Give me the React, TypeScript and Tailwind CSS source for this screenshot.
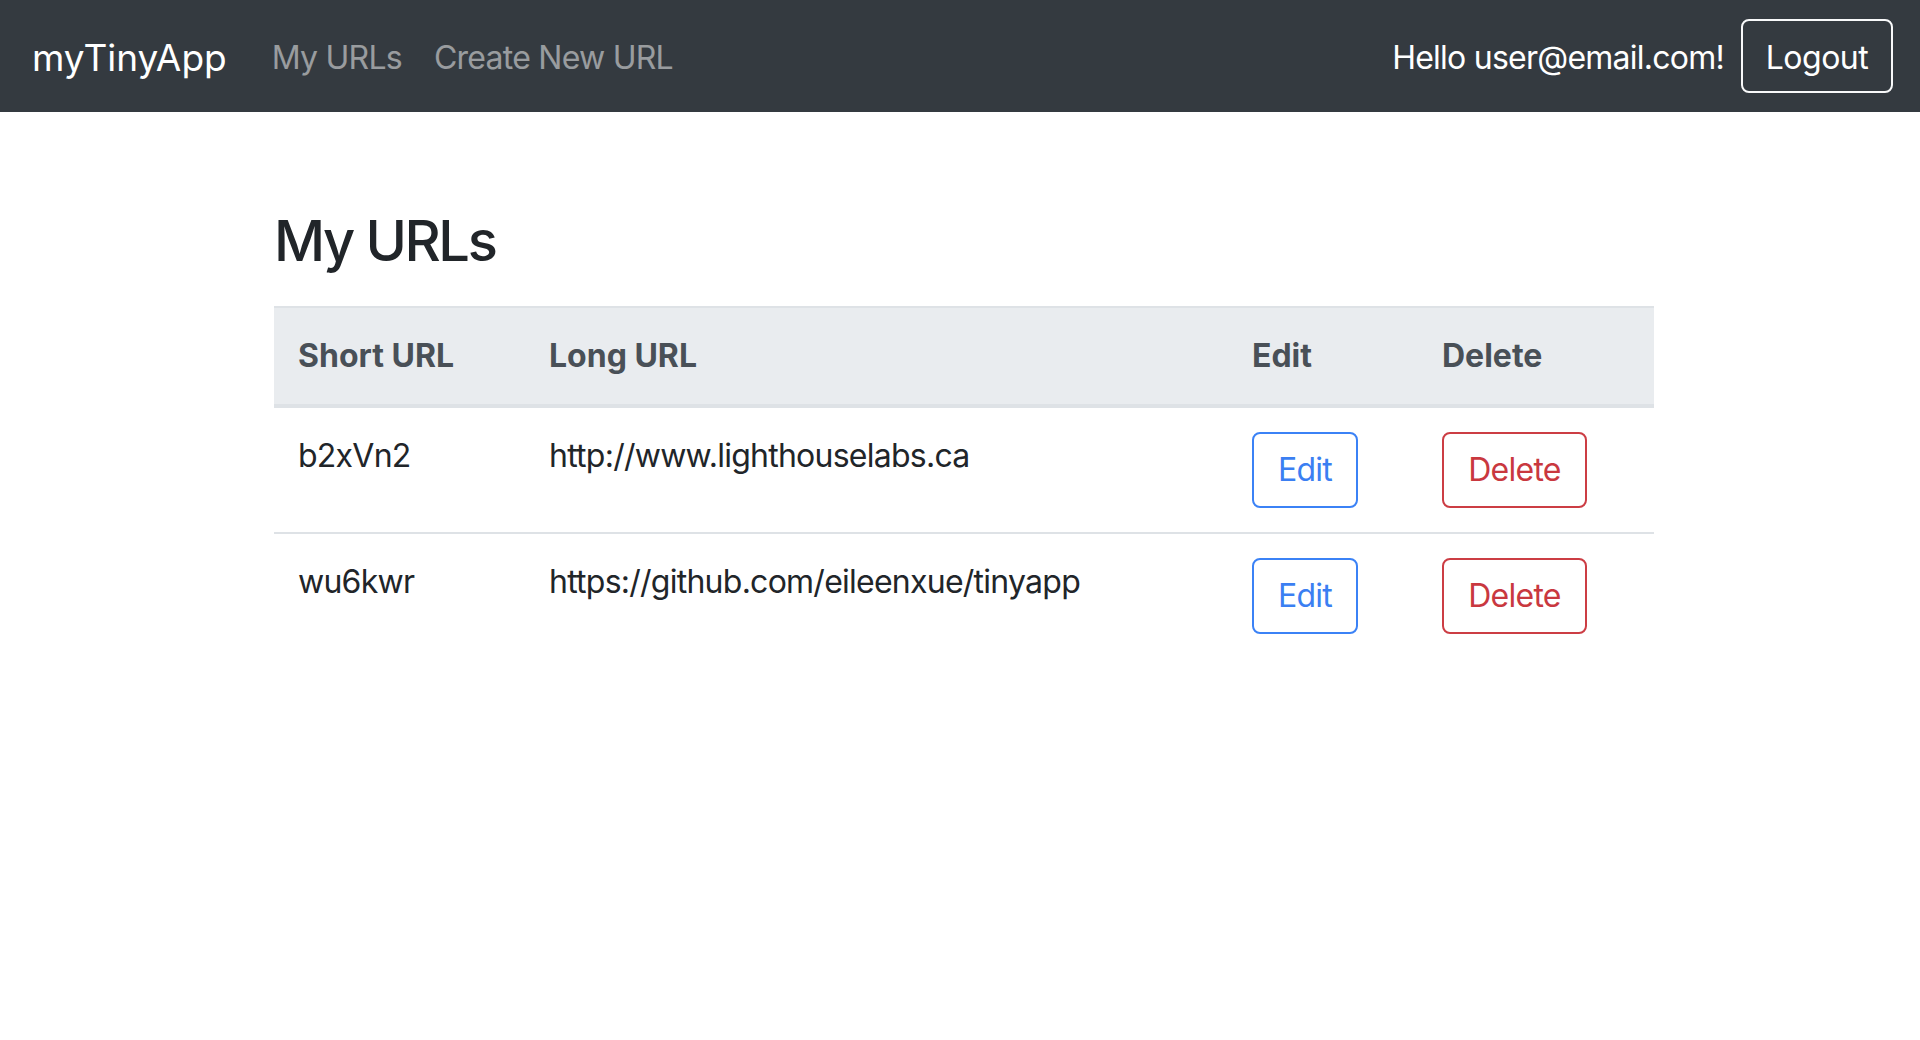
const urls = [
  { short: 'b2xVn2', long: 'http://www.lighthouselabs.ca' },
  { short: 'wu6kwr', long: 'https://github.com/eileenxue/tinyapp' },
]

export default function App() {
  return (
    <div className="min-h-screen bg-white font-['Inter','Liberation_Sans',sans-serif] text-[#212529]">
      <nav className="flex h-[112px] items-center bg-[#343a40] pl-[32px] pr-[27px]">
        <a className="mr-[29px] pt-[4px] text-[37px] leading-[40px] text-white">myTinyApp</a>
        <a className="px-[16px] pt-[4px] text-[32px] leading-[48px] tracking-[-0.75px] text-white/50">My URLs</a>
        <a className="px-[16px] pt-[4px] text-[32px] leading-[48px] tracking-[-0.75px] text-white/50">Create New URL</a>
        <div className="ml-auto flex items-center">
          <span className="pt-[4px] text-[32px] leading-[48px] tracking-[-0.75px] text-white">Hello user@email.com!</span>
          <button className="ml-[17px] h-[74px] w-[152px] rounded-[8px] border-2 border-[#f8f9fa] pt-[3px] text-[32px] tracking-[-0.5px] text-white">
            Logout
          </button>
        </div>
      </nav>

      <main className="ml-[274px] w-[1380px] pt-[96px]">
        <h3 className="mb-[31px] text-[56px] font-medium leading-[67px] tracking-[-2.4px]">My URLs</h3>
        <table className="w-full table-fixed border-collapse text-[32px] leading-[48px]">
          <colgroup>
            <col className="w-[251px]" />
            <col className="w-[703px]" />
            <col className="w-[190px]" />
            <col className="w-[236px]" />
          </colgroup>
          <thead>
            <tr className="bg-[#e9ecef] text-[#495057]">
              {['Short URL', 'Long URL', 'Edit', 'Delete'].map((h) => (
                <th
                  key={h}
                  className="whitespace-nowrap border-t-2 border-b-4 border-[#dee2e6] p-[24px] text-left font-bold"
                >
                  {h}
                </th>
              ))}
            </tr>
          </thead>
          <tbody className="tracking-[-0.75px]">
            {urls.map((u) => (
              <tr key={u.short}>
                <td className="whitespace-nowrap border-t-2 border-[#dee2e6] p-[24px] align-top">{u.short}</td>
                <td className="whitespace-nowrap border-t-2 border-[#dee2e6] p-[24px] align-top">{u.long}</td>
                <td className="border-t-2 border-[#dee2e6] p-[24px] align-top">
                  <button className="h-[76px] w-[106px] rounded-[8px] border-2 border-[#3b82f6] text-[#3b7ff2]">
                    Edit
                  </button>
                </td>
                <td className="border-t-2 border-[#dee2e6] p-[24px] align-top">
                  <button className="h-[76px] w-[145px] rounded-[8px] border-2 border-[#cc3d44] text-[#c9383f]">
                    Delete
                  </button>
                </td>
              </tr>
            ))}
          </tbody>
        </table>
      </main>
    </div>
  )
}
